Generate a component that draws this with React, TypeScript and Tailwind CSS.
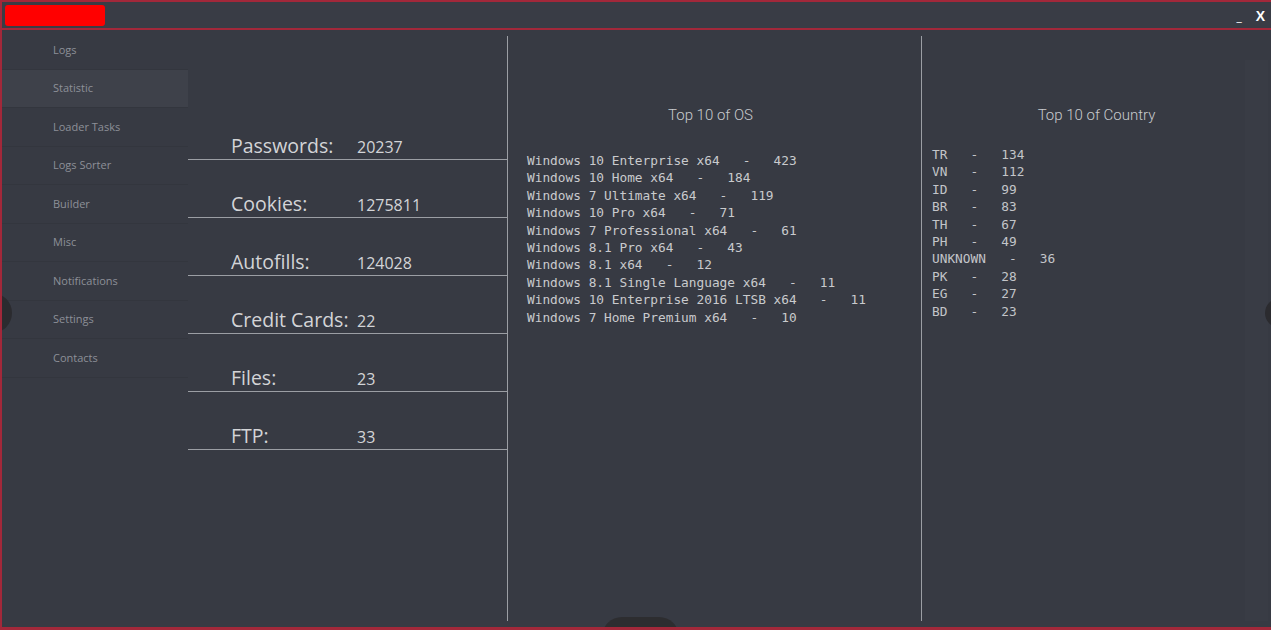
import React from 'react';

const menu = ['Logs', 'Statistic', 'Loader Tasks', 'Logs Sorter', 'Builder', 'Misc', 'Notifications', 'Settings', 'Contacts'];

const stats = [
  { label: 'Passwords:', value: '20237' },
  { label: 'Cookies:', value: '1275811' },
  { label: 'Autofills:', value: '124028' },
  { label: 'Credit Cards:', value: '22' },
  { label: 'Files:', value: '23' },
  { label: 'FTP:', value: '33' },
];

const osList = [
  'Windows 10 Enterprise x64   -   423',
  'Windows 10 Home x64   -   184',
  'Windows 7 Ultimate x64   -   119',
  'Windows 10 Pro x64   -   71',
  'Windows 7 Professional x64   -   61',
  'Windows 8.1 Pro x64   -   43',
  'Windows 8.1 x64   -   12',
  'Windows 8.1 Single Language x64   -   11',
  'Windows 10 Enterprise 2016 LTSB x64   -   11',
  'Windows 7 Home Premium x64   -   10',
];

const countries = [
  'TR   -   134',
  'VN   -   112',
  'ID   -   99',
  'BR   -   83',
  'TH   -   67',
  'PH   -   49',
  'UNKNOWN   -   36',
  'PK   -   28',
  'EG   -   27',
  'BD   -   23',
];

const sans = { fontFamily: '"Open Sans", "Noto Sans", sans-serif' };
const mono = { fontFamily: '"DejaVu Sans Mono", "Liberation Mono", monospace' };

export default function App() {
  return (
    <div className="relative w-[1271px] h-[630px] overflow-hidden bg-[#373a43] flex flex-col border-l-2 border-b-[3px] border-[#a2283a]" style={sans}>
      {/* Title bar */}
      <div className="h-[30px] shrink-0 flex items-center justify-between border-t-2 border-b-2 border-[#a2283a] bg-[#393c45] pl-[3px] pr-[6px]">
        <div className="w-[100px] h-[21px] bg-[#ff0000] rounded-[3px]" />
        <div className="flex items-end gap-[14px] text-white">
          <span className="text-[12px] leading-none mt-[4px]">_</span>
          <span className="text-[14px] font-bold leading-none" style={{ fontFamily: '"Liberation Sans", sans-serif' }}>X</span>
        </div>
      </div>

      <div className="flex-1 flex min-h-0">
        {/* Sidebar */}
        <div className="w-[186px] shrink-0 pt-px">
          {menu.map((m) => (
            <div
              key={m}
              className={`h-[38.5px] flex items-center pl-[51px] text-[11px] text-[#8d9098] border-b border-[#33363e] ${m === 'Statistic' ? 'bg-[#3e414a]' : ''}`}
            >
              {m}
            </div>
          ))}
        </div>

        {/* Stats */}
        <div className="w-[319px] shrink-0 pt-[72px]">
          {stats.map((s) => (
            <div key={s.label} className="h-[58px] flex items-end pl-[43px] border-b border-[#9b9ea4]">
              <span className="w-[126px] text-[19.5px] leading-[26px] text-[#d3d4d7]">{s.label}</span>
              <span className="text-[16px] leading-[24px] text-[#d3d4d7]">{s.value}</span>
            </div>
          ))}
        </div>

        <div className="w-px bg-[#9b9ea4] my-[6px]" />

        {/* Top 10 OS */}
        <div className="w-[413px] shrink-0 pt-[75px]">
          <div className="text-center text-[15px] leading-[20px] font-light text-[#c8cace] pr-[8px]" style={{ fontFamily: 'Roboto, sans-serif' }}>
            Top 10 of OS
          </div>
          <div className="mt-[27px] pl-[19px] text-[12.8px] leading-[17.4px] text-[#c9cacd] whitespace-pre" style={mono}>
            {osList.map((o) => (
              <div key={o}>{o}</div>
            ))}
          </div>
        </div>

        <div className="w-px bg-[#9b9ea4] my-[6px]" />

        {/* Top 10 Country */}
        <div className="flex-1 relative pt-[75px]">
          <div className="text-center text-[15px] leading-[20px] font-light text-[#c8cace]" style={{ fontFamily: 'Roboto, sans-serif' }}>
            Top 10 of Country
          </div>
          <div className="mt-[21px] pl-[10px] text-[12.8px] leading-[17.4px] text-[#c3c5c9] whitespace-pre" style={mono}>
            {countries.map((c) => (
              <div key={c}>{c}</div>
            ))}
          </div>
          <div className="absolute right-[3px] top-[30px] bottom-[6px] w-[23px] bg-[#393c45]" />
        </div>
      </div>

      {/* overlay knobs */}
      <div className="absolute left-[-30px] top-[293px] w-[40px] h-[40px] rounded-full bg-[#2b2b2f]" />
      <div className="absolute right-[-34px] top-[298px] w-[40px] h-[30px] rounded-full bg-[#2b2b2f]" />
      <div className="absolute left-[600px] bottom-[-30px] w-[77px] h-[40px] rounded-[20px] bg-[#2d2d30]" />
    </div>
  );
}
